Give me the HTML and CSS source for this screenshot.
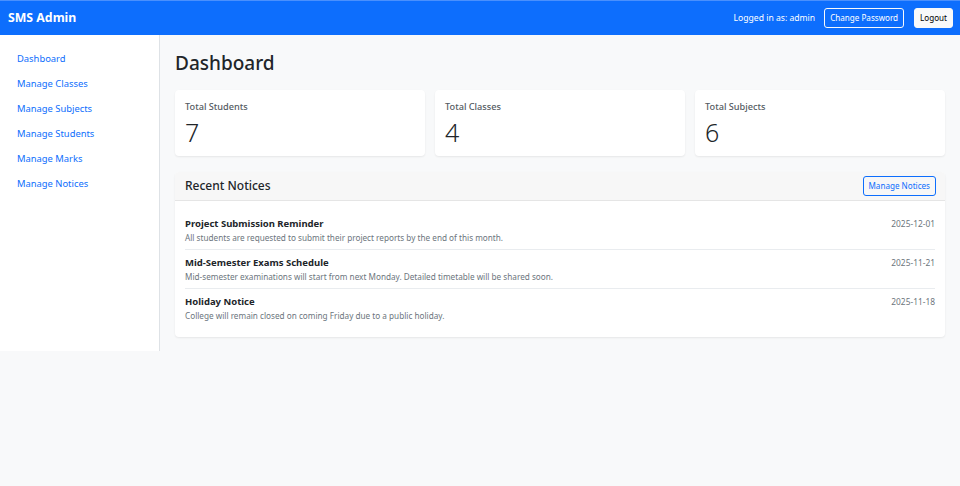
FILE: index.html
```html
<!DOCTYPE html>
<html lang="en">
<head>
<meta charset="utf-8">
<title>SMS Admin - Dashboard</title>
<link rel="stylesheet" href="styles.css">
</head>
<body>
<nav class="navbar">
  <a class="brand" href="#">SMS Admin</a>
  <div class="nav-right">
    <span class="user">Logged in as: admin</span>
    <a class="btn btn-outline-light" href="#">Change Password</a>
    <a class="btn btn-light" href="#">Logout</a>
  </div>
</nav>
<div class="layout">
  <aside class="sidebar">
    <ul class="side-nav">
      <li><a href="#">Dashboard</a></li>
      <li><a href="#">Manage Classes</a></li>
      <li><a href="#">Manage Subjects</a></li>
      <li><a href="#">Manage Students</a></li>
      <li><a href="#">Manage Marks</a></li>
      <li><a href="#">Manage Notices</a></li>
    </ul>
  </aside>
  <main class="main">
    <h2 class="page-title">Dashboard</h2>
    <div class="stats">
      <div class="card stat">
        <div class="stat-label">Total Students</div>
        <div class="stat-value">7</div>
      </div>
      <div class="card stat">
        <div class="stat-label">Total Classes</div>
        <div class="stat-value">4</div>
      </div>
      <div class="card stat">
        <div class="stat-label">Total Subjects</div>
        <div class="stat-value">6</div>
      </div>
    </div>
    <div class="card notices">
      <div class="card-header">
        <h5 class="header-title">Recent Notices</h5>
        <a class="btn btn-outline-primary" href="#">Manage Notices</a>
      </div>
      <div class="card-body">
        <ul class="notice-list">
          <li class="notice">
            <div class="notice-text">
              <div class="notice-title">Project Submission Reminder</div>
              <div class="notice-desc">All students are requested to submit their project reports by the end of this month.</div>
            </div>
            <div class="notice-date">2025-12-01</div>
          </li>
          <li class="notice">
            <div class="notice-text">
              <div class="notice-title">Mid-Semester Exams Schedule</div>
              <div class="notice-desc">Mid-semester examinations will start from next Monday. Detailed timetable will be shared soon.</div>
            </div>
            <div class="notice-date">2025-11-21</div>
          </li>
          <li class="notice">
            <div class="notice-text">
              <div class="notice-title">Holiday Notice</div>
              <div class="notice-desc">College will remain closed on coming Friday due to a public holiday.</div>
            </div>
            <div class="notice-date">2025-11-18</div>
          </li>
        </ul>
      </div>
    </div>
  </main>
</div>
</body>
</html>
```
FILE: styles.css
```css
* { box-sizing: border-box; }
html, body { margin: 0; padding: 0; }
body {
  font-family: "Noto Sans", "Open Sans", sans-serif;
  font-size: 10px;
  line-height: 1.5;
  color: #212529;
  background: #f8f9fa;
}
a { text-decoration: none; }

.navbar {
  height: 35px;
  background: #0d6efd;
  border-top: 1px solid #4a90fd;
  display: flex;
  align-items: center;
  justify-content: space-between;
  padding: 0 7px 0 8px;
}
.brand {
  color: #fff;
  font-weight: 700;
  font-size: 12.3px;
}
.nav-right {
  display: flex;
  align-items: center;
  gap: 10px;
}
.user { color: #fff; font-size: 8.6px; margin-right: -1px; }
.btn {
  display: inline-block;
  font-size: 8.1px;
  line-height: 13.6px;
  padding: 2.6px 5px;
  border: 1px solid transparent;
  border-radius: 3px;
}
.btn-outline-light { color: #fff; border-color: #f8f9fa; }
.btn-light { color: #000; background: #f8f9fa; border-color: #f8f9fa; }
.btn-outline-primary { color: #0d6efd; border-color: #0d6efd; }

.layout { display: flex; align-items: stretch; }
.sidebar {
  width: 160px;
  flex: 0 0 160px;
  background: #fff;
  border-right: 1px solid #dee2e6;
  padding: 11px 7px;
}
.side-nav { list-style: none; margin: 0; padding: 0; }
.side-nav a {
  display: block;
  color: #0d6efd;
  font-size: 9.4px;
  line-height: 15px;
  padding: 5px 10px;
}

.main {
  flex: 1;
  padding: 17px 15px 14px;
}
.page-title {
  margin: 0 0 15px;
  font-size: 19px;
  font-weight: 500;
  line-height: 23px;
}
.card {
  background: #fff;
  border-radius: 4px;
  box-shadow: 0 1px 2px rgba(0,0,0,.075);
}
.stats {
  display: grid;
  grid-template-columns: repeat(3, 1fr);
  gap: 10px;
  margin-bottom: 16px;
}
.stat { padding: 9px 10px 8px; height: 66px; }
.stat-label { color: #555c63; font-size: 9.2px; font-weight: 500; line-height: 15px; margin-bottom: 3px; }
.stat-value { font-size: 25px; font-weight: 300; line-height: 30px; }

.card-header {
  display: flex;
  align-items: center;
  justify-content: space-between;
  padding: 5px 9px 5px 10px;
  height: 29px;
  background: #f7f7f7;
  border-bottom: 1px solid #e5e5e5;
  border-radius: 4px 4px 0 0;
}
.header-title { margin: 0; font-size: 12px; font-weight: 500; line-height: 1.2; }
.card-body { padding: 10px; }
.notice-list { list-style: none; margin: 0; padding: 0; }
.notice {
  display: flex;
  justify-content: space-between;
  align-items: flex-start;
  padding: 5px 0;
  border-bottom: 1px solid #e9ecef;
}
.notice:last-child { border-bottom: 0; }
.notice-title { font-weight: 700; font-size: 9.5px; line-height: 15px; }
.notice-desc { color: #6c757d; font-size: 8.2px; line-height: 13px; }
.notice-date { color: #6c757d; font-size: 8.4px; line-height: 13px; padding-top: 1px; }
```
